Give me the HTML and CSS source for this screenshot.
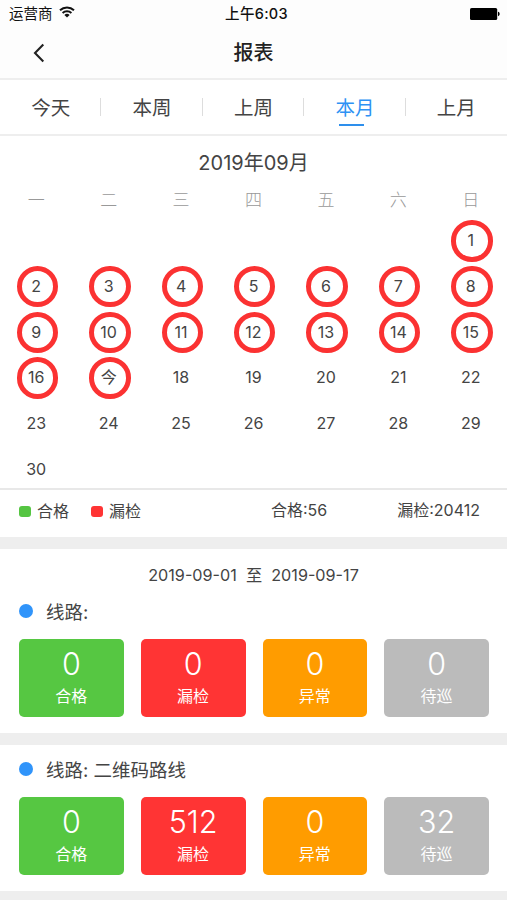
FILE: index.html
```
<!DOCTYPE html>
<html lang="zh-CN">
<head>
    <meta charset="UTF-8">
    <meta name="viewport" content="width=device-width, initial-scale=1.0">
    <title>报表</title>
    <link rel="stylesheet" href="styles.css">
</head>
<body>
    <header class="header">
        <div class="status-bar">
            <div class="carrier">
                <span>运营商</span>
                <svg class="wifi" width="16" height="12" viewBox="0 0 16 12">
                    <path d="M1 4.2a10.2 10.2 0 0 1 14 0M3.6 6.9a6.4 6.4 0 0 1 8.8 0" fill="none" stroke="#111" stroke-width="2"/>
                    <path d="M8 11.6L5.4 9a3.8 3.8 0 0 1 5.2 0z" fill="#111"/>
                </svg>
            </div>
            <span class="time">上午6:03</span>
            <svg class="battery" width="30" height="12" viewBox="0 0 30 12">
                <rect width="27.2" height="12" rx="1.6"/>
                <path d="M28 3.8c2.2.6 2.2 3.8 0 4.4z"/>
            </svg>
        </div>
        <div class="nav-bar">
            <svg class="back" width="12" height="20" viewBox="0 0 12 20">
                <path d="M10.3 1.5L2 10l8.3 8.5" fill="none" stroke="#222" stroke-width="2.1"/>
            </svg>
            <h1>报表</h1>
        </div>
    </header>

    <nav class="tabs">
        <a class="tab">今天</a>
        <a class="tab">本周</a>
        <a class="tab">上周</a>
        <a class="tab active">本月</a>
        <a class="tab">上月</a>
    </nav>

    <section class="calendar">
        <h2>2019年09月</h2>
        <div class="weekdays">
            <span>一</span><span>二</span><span>三</span><span>四</span><span>五</span><span>六</span><span>日</span>
        </div>
        <div class="days">
            <span class="day first missed">1</span>
            <span class="day missed">2</span>
            <span class="day missed">3</span>
            <span class="day missed">4</span>
            <span class="day missed">5</span>
            <span class="day missed">6</span>
            <span class="day missed">7</span>
            <span class="day missed">8</span>
            <span class="day missed">9</span>
            <span class="day missed">10</span>
            <span class="day missed">11</span>
            <span class="day missed">12</span>
            <span class="day missed">13</span>
            <span class="day missed">14</span>
            <span class="day missed">15</span>
            <span class="day missed">16</span>
            <span class="day missed">今</span>
            <span class="day">18</span>
            <span class="day">19</span>
            <span class="day">20</span>
            <span class="day">21</span>
            <span class="day">22</span>
            <span class="day">23</span>
            <span class="day">24</span>
            <span class="day">25</span>
            <span class="day">26</span>
            <span class="day">27</span>
            <span class="day">28</span>
            <span class="day">29</span>
            <span class="day">30</span>
        </div>
    </section>

    <section class="legend">
        <span class="key key-ok">合格</span>
        <span class="key key-missed">漏检</span>
        <span class="total total-ok">合格:56</span>
        <span class="total">漏检:20412</span>
    </section>

    <section class="route">
        <p class="range">2019-09-01&nbsp; 至&nbsp; 2019-09-17</p>
        <h3>线路:</h3>
        <div class="cards">
            <div class="card ok"><strong>0</strong><span>合格</span></div>
            <div class="card missed-card"><strong>0</strong><span>漏检</span></div>
            <div class="card abnormal"><strong>0</strong><span>异常</span></div>
            <div class="card pending"><strong>0</strong><span>待巡</span></div>
        </div>
    </section>

    <section class="route">
        <h3>线路: 二维码路线</h3>
        <div class="cards">
            <div class="card ok"><strong>0</strong><span>合格</span></div>
            <div class="card missed-card"><strong>512</strong><span>漏检</span></div>
            <div class="card abnormal"><strong>0</strong><span>异常</span></div>
            <div class="card pending"><strong>32</strong><span>待巡</span></div>
        </div>
    </section>
</body>
</html>
```
FILE: styles.css
```
*, *::before, *::after {
    box-sizing: border-box;
}
body {
    margin: 0;
    height: 900px;
    overflow: hidden;
    background: #eee;
    color: #444;
    font-family: Inter, "Noto Sans CJK SC", sans-serif;
}
h1, h2, h3, p {
    margin: 0;
    font-weight: 400;
}
.header {
    height: 80px;
    background: #fdfdfd;
    border-bottom: 2px solid #eee;
}
.status-bar {
    display: grid;
    grid-template-columns: 1fr auto 1fr;
    align-items: center;
    height: 27px;
    padding: 0 7px 0 9px;
    font-size: 14.5px;
    line-height: 27px;
    color: #111;
}
.carrier {
    display: flex;
    align-items: center;
    gap: 6px;
}
.wifi {
    margin-top: -3px;
}
.time {
    padding-left: 4px;
    font-weight: 500;
    font-size: 14.5px;
    letter-spacing: 0.3px;
}
.battery {
    justify-self: end;
}
.nav-bar {
    display: grid;
    grid-template-columns: 1fr auto 1fr;
    align-items: center;
    height: 51px;
}
.back {
    margin-left: 33px;
}
.nav-bar h1 {
    padding-top: 2px;
    font-size: 20px;
    font-weight: 500;
    line-height: 49px;
    color: #222;
}
.tabs {
    display: flex;
    height: 56px;
    background: #fff;
    border-bottom: 2px solid #eee;
}
.tab {
    position: relative;
    flex: 1;
    text-align: center;
    font-size: 19.5px;
    line-height: 56px;
}
.tab + .tab::before {
    content: "";
    position: absolute;
    left: -1px;
    top: 18px;
    width: 1px;
    height: 18px;
    background: #ddd;
}
.tab.active {
    color: #2e92f4;
}
.tab.active::after {
    content: "";
    position: absolute;
    left: 35px;
    bottom: 8px;
    width: 25px;
    height: 2px;
    background: #2e8fec;
}
.calendar {
    height: 354px;
    background: #fff;
    border-bottom: 2px solid #e8e8e8;
}
.calendar h2 {
    padding-top: 12px;
    font-size: 20px;
    line-height: 30px;
    text-align: center;
}
.weekdays {
    display: grid;
    grid-template-columns: repeat(7, 1fr);
    padding-top: 7px;
    font-size: 17px;
    font-weight: 300;
    line-height: 30px;
    text-align: center;
    color: #999;
}
.days {
    display: grid;
    grid-template-columns: repeat(7, 1fr);
    grid-auto-rows: 45.8px;
    padding-top: 3px;
}
.day {
    position: relative;
    font-size: 16px;
    line-height: 45.5px;
    text-align: center;
}
.first {
    grid-column: 7;
}
/* ring around days with missed checks */
.missed::after {
    content: "";
    position: absolute;
    left: 50%;
    top: 2px;
    width: 41.5px;
    height: 41.5px;
    margin-left: -19.5px;
    border: 5px solid #fb3232;
    border-radius: 50%;
}
.legend {
    display: flex;
    height: 47px;
    padding: 0 27px 0 19px;
    background: #fff;
    font-size: 16px;
    line-height: 40px;
}
.key {
    display: flex;
    align-items: center;
    gap: 6px;
    width: 72px;
    height: 42px;
}
.key::before {
    content: "";
    width: 12px;
    height: 11px;
    border-radius: 3px;
}
.key-ok::before {
    background: #55c542;
}
.key-missed::before {
    background: #ff3434;
}
.total-ok {
    margin-left: auto;
    margin-right: 70px;
}
.route {
    margin-top: 12px;
    background: #fff;
    padding-bottom: 16px;
}
.range {
    height: 38px;
    padding-top: 11px;
    font-size: 16.2px;
    line-height: 31px;
    text-align: center;
}
.route h3 {
    display: flex;
    align-items: center;
    gap: 13px;
    height: 51.7px;
    padding: 0 0 4px 19px;
    font-size: 18.5px;
}
.route h3::before {
    content: "";
    width: 14px;
    height: 14px;
    border-radius: 50%;
    background: #3094fa;
}
.cards {
    display: grid;
    grid-template-columns: repeat(4, 1fr);
    gap: 17px;
    padding: 0 18px 0 19px;
}
.card {
    display: flex;
    flex-direction: column;
    align-items: center;
    height: 78.5px;
    padding-top: 6px;
    border-radius: 5px;
    color: #fff;
}
.card strong {
    font-size: 30.5px;
    font-weight: 350;
    line-height: 38px;
}
.card span {
    font-size: 16px;
    line-height: 27px;
}
.ok {
    background: #56c742;
}
.missed-card {
    background: #ff3434;
}
.abnormal {
    background: #ff9c00;
}
.pending {
    background: #bbb;
}
```
